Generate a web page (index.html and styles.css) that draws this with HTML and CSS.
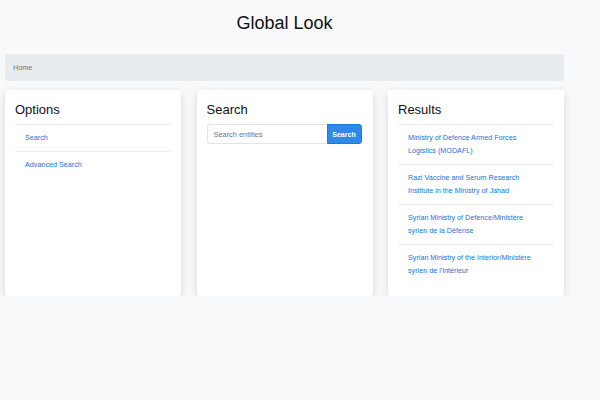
FILE: index.html
```html
<!DOCTYPE html>
<html lang="en">
<head>
<meta charset="utf-8">
<title>Global Look</title>
<link rel="stylesheet" href="styles.css">
</head>
<body>
<div class="container">
  <h1 class="title">Global Look</h1>
  <nav class="breadcrumb"><span class="crumb">Home</span></nav>
  <div class="cards">
    <section class="card">
      <h3 class="card-title">Options</h3>
      <ul class="list">
        <li class="item"><a class="link" href="#">Search</a></li>
        <li class="item"><a class="link" href="#">Advanced Search</a></li>
      </ul>
    </section>
    <section class="card">
      <h3 class="card-title">Search</h3>
      <form class="search">
        <input class="search-input" type="text" placeholder="Search entities">
        <button class="search-btn" type="button">Search</button>
      </form>
    </section>
    <section class="card">
      <h3 class="card-title">Results</h3>
      <ul class="list">
        <li class="item"><a class="link" href="#">Ministry of Defence Armed Forces Logistics (MODAFL)</a></li>
        <li class="item"><a class="link" href="#">Razi Vaccine and Serum Research Institute in the Ministry of Jahad</a></li>
        <li class="item"><a class="link" href="#">Syrian Ministry of Defence/Ministère syrien de la Défense</a></li>
        <li class="item"><a class="link" href="#">Syrian Ministry of the Interior/Ministère syrien de l'Intérieur</a></li>
      </ul>
    </section>
  </div>
</div>
</body>
</html>
```

FILE: styles.css
```css
* { box-sizing: border-box; }
html, body {
  margin: 0;
  padding: 0;
  background: #f8f9fa;
  font-family: "Liberation Sans", Arial, Helvetica, sans-serif;
  color: #212529;
}
.container {
  width: 559px;
  margin-left: 5px;
  padding-top: 12.5px;
}
.title {
  margin: 0 0 20.5px 0;
  font-size: 18px;
  font-weight: 400;
  line-height: 21px;
  text-align: center;
  color: #111;
}
.breadcrumb {
  height: 27px;
  background: #e9ecef;
  border-radius: 3px;
  padding: 0 8px;
  display: flex;
  align-items: center;
  margin-bottom: 9px;
}
.crumb {
  font-size: 7.2px;
  color: #6c757d;
}
.cards {
  display: grid;
  grid-template-columns: 176px 176px 176px;
  column-gap: 15.5px;
}
.card {
  background: #fff;
  border-radius: 3px;
  box-shadow: 0 3px 10px rgba(0, 0, 0, 0.13);
  padding: 11px 10px 12px 10px;
  min-height: 206px;
}
.card-title {
  margin: 0 0 6px 0;
  font-size: 13px;
  font-weight: 400;
  line-height: 17px;
  color: #111;
}
.list {
  list-style: none;
  margin: 0;
  padding: 0;
}
.item {
  border-top: 1px solid #eceeef;
  padding: 6px 10px 7px 10px;
  font-size: 7.2px;
  line-height: 13px;
}
.link {
  color: #1a73d9;
  text-decoration: none;
}
.search {
  display: flex;
  margin: 0;
}
.search-input {
  width: 120px;
  height: 20px;
  border: 1px solid #e2e5e8;
  border-right: none;
  border-radius: 3px 0 0 3px;
  padding: 0 6px;
  font-family: inherit;
  font-size: 7.4px;
  color: #495057;
  background: #fff;
  outline: none;
}
.search-input::placeholder { color: #6c757d; }
.search-btn {
  width: 35px;
  height: 20px;
  border: 1px solid #1f7ad6;
  border-radius: 0 3px 3px 0;
  background: #2e8ae6;
  color: #fff;
  font-family: inherit;
  font-size: 7px;
  font-weight: 700;
  padding: 0;
}
```
